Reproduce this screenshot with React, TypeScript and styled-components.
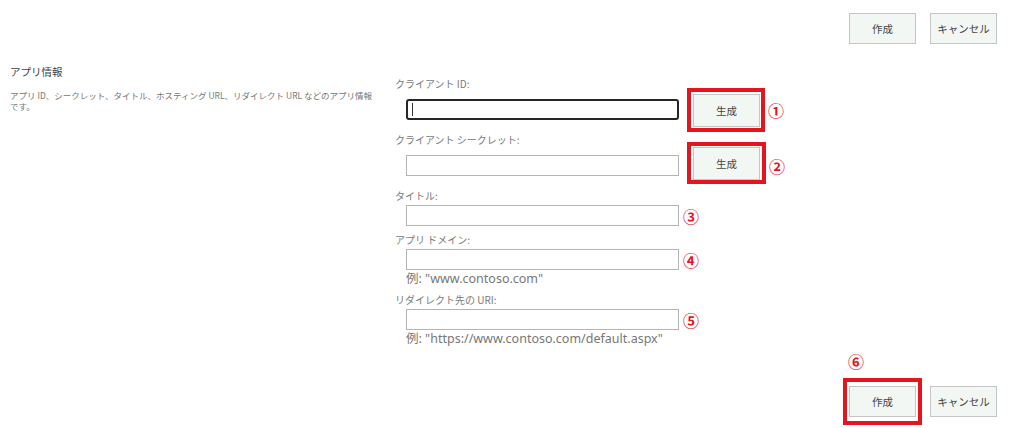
import React from "react";
import styled, { createGlobalStyle } from "styled-components";

const GlobalStyle = createGlobalStyle`
  html, body {
    margin: 0;
    padding: 0;
    background: #ffffff;
  }
  body {
    font-family: "Noto Sans", "Noto Sans CJK JP", sans-serif;
    color: #444;
  }
`;

const Page = styled.div`
  width: 1024px;
  height: 428px;
  overflow: hidden;
  display: flex;
  flex-direction: column;
`;

const ButtonBar = styled.div<{ $bottom?: boolean }>`
  display: flex;
  justify-content: flex-end;
  align-items: flex-end;
  gap: 14px;
  padding: ${(p) => (p.$bottom ? "0 27px 0 0" : "13px 27px 0 0")};
  margin-top: ${(p) => (p.$bottom ? "5px" : "0")};
`;

const ActionButton = styled.button<{ $tall?: boolean }>`
  width: 67px;
  height: ${(p) => (p.$tall ? "33px" : "31px")};
  box-sizing: border-box;
  background: #f3f7f4;
  border: 1px solid #c4c6c5;
  border-radius: 0;
  padding: 0;
  font-family: "Noto Sans CJK JP", sans-serif;
  font-size: 10.5px;
  color: #444;
  cursor: pointer;
`;

const Highlight = styled.div<{ $pad: string; $pull?: string }>`
  display: flex;
  border: 4px solid #e5141f;
  padding: ${(p) => p.$pad};
  margin: ${(p) => p.$pull ?? "0"};
`;

const Marker = styled.span`
  font-family: "Noto Sans CJK JP", sans-serif;
  font-size: 16px;
  font-weight: 700;
  line-height: 18px;
  color: #e5141f;
`;

const AnnotatedAction = styled.div`
  display: flex;
  flex-direction: column;
  align-items: flex-start;
`;

const TopMarker = styled(Marker)`
  margin: 0 0 8px -1px;
`;

const Main = styled.div`
  display: flex;
  align-items: flex-start;
`;

const InfoColumn = styled.section`
  width: 395px;
  box-sizing: border-box;
  padding: 21px 18px 0 10px;
`;

const InfoTitle = styled.h2`
  margin: 0;
  font-family: "Noto Sans CJK JP", sans-serif;
  font-size: 10.5px;
  font-weight: 400;
  line-height: 14px;
  color: #444;
`;

const InfoText = styled.p`
  margin: 11px 0 0;
  font-family: "Noto Sans CJK JP", sans-serif;
  font-size: 8.5px;
  line-height: 11px;
  color: #777;
`;

const FormColumn = styled.div`
  display: flex;
  flex-direction: column;
  gap: 5px;
  padding-top: 32px;
`;

const Field = styled.div`
  display: flex;
  flex-direction: column;
`;

const Label = styled.label`
  font-family: "Noto Sans CJK JP", sans-serif;
  font-size: 10px;
  line-height: 16px;
  color: #7a7a7a;
`;

const Row = styled.div<{ $height: number }>`
  display: flex;
  align-items: center;
  height: ${(p) => p.$height}px;
  padding-left: 11px;
`;

const TextBox = styled.div<{ $focused?: boolean }>`
  width: 273px;
  height: 21px;
  box-sizing: border-box;
  display: flex;
  align-items: center;
  padding-left: 4px;
  background: #fff;
  border: ${(p) => (p.$focused ? "2px solid #262626" : "1px solid #b4b4b4")};
  border-radius: ${(p) => (p.$focused ? "3px" : "0")};
`;

const Caret = styled.span`
  width: 1px;
  height: 13px;
  background: #333;
`;

const GenerateSlot = styled.div<{ $lift?: number }>`
  margin-left: 8px;
  margin-top: ${(p) => (p.$lift ? -p.$lift : 0)}px;
`;

const RowMarker = styled(Marker)<{ $gap: number }>`
  margin-left: ${(p) => p.$gap}px;
`;

const Hint = styled.div`
  padding-left: 11px;
  font-family: "Noto Sans", "Noto Sans CJK JP", sans-serif;
  font-size: 12.5px;
  line-height: 16px;
  color: #777;
`;

const App: React.FC = () => {
  return (
    <Page>
      <GlobalStyle />
      <ButtonBar>
        <ActionButton>作成</ActionButton>
        <ActionButton>キャンセル</ActionButton>
      </ButtonBar>

      <Main>
        <InfoColumn>
          <InfoTitle>アプリ情報</InfoTitle>
          <InfoText>
            アプリ ID、シークレット、タイトル、ホスティング URL、リダイレクト URL などのアプリ情報です。
          </InfoText>
        </InfoColumn>

        <FormColumn>
          <Field>
            <Label>クライアント ID:</Label>
            <Row $height={35}>
              <TextBox $focused>
                <Caret />
              </TextBox>
              <GenerateSlot>
                <Highlight $pad="2px 1px 1px 2px">
                  <ActionButton $tall>生成</ActionButton>
                </Highlight>
              </GenerateSlot>
              <RowMarker $gap={3}>①</RowMarker>
            </Row>
          </Field>

          <Field>
            <Label>クライアント シークレット:</Label>
            <Row $height={35}>
              <TextBox />
              <GenerateSlot $lift={6}>
                <Highlight $pad="1px 2px 0 2px">
                  <ActionButton $tall>生成</ActionButton>
                </Highlight>
              </GenerateSlot>
              <RowMarker $gap={3}>②</RowMarker>
            </Row>
          </Field>

          <Field>
            <Label>タイトル:</Label>
            <Row $height={23}>
              <TextBox />
              <RowMarker $gap={4}>③</RowMarker>
            </Row>
          </Field>

          <Field>
            <Label>アプリ ドメイン:</Label>
            <Row $height={23}>
              <TextBox />
              <RowMarker $gap={4}>④</RowMarker>
            </Row>
            <Hint>例: "www.contoso.com"</Hint>
          </Field>

          <Field>
            <Label>リダイレクト先の URI:</Label>
            <Row $height={23}>
              <TextBox />
              <RowMarker $gap={4}>⑤</RowMarker>
            </Row>
            <Hint>例: "https://www.contoso.com/default.aspx"</Hint>
          </Field>
        </FormColumn>
      </Main>

      <ButtonBar $bottom>
        <AnnotatedAction>
          <TopMarker>⑥</TopMarker>
          <Highlight $pad="4px 2px" $pull="0 -6px -8px -6px">
            <ActionButton>作成</ActionButton>
          </Highlight>
        </AnnotatedAction>
        <ActionButton>キャンセル</ActionButton>
      </ButtonBar>
    </Page>
  );
};

export default App;
